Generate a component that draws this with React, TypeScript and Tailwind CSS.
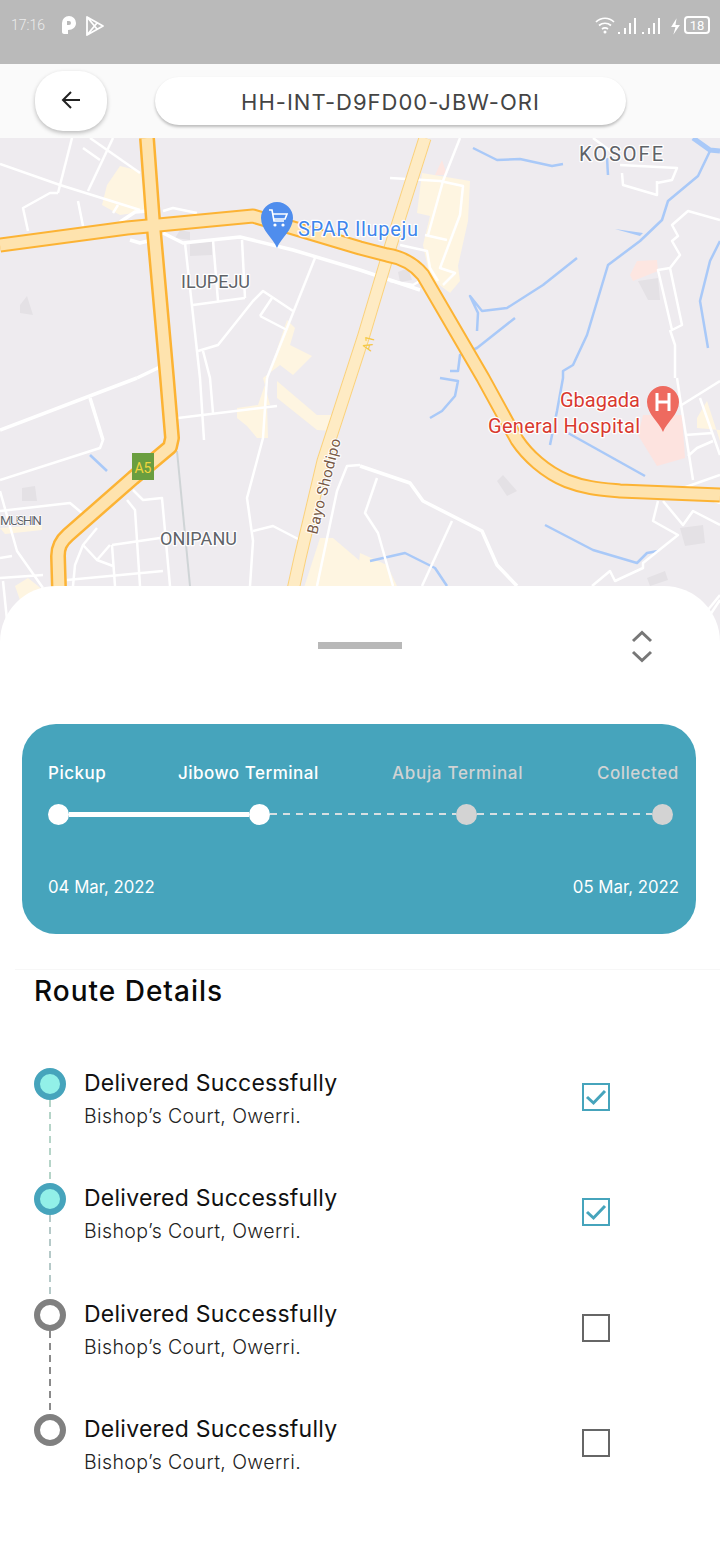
import React from "react";

const whiteThin = [
  "M0 164L60 185L140 210", "M72 138L58 193", "M113 138L88 191", "M83 148L100 160", "M90 138L140 173",
  "M58 193L50 193L23 208L28 231", "M78 201L83 226", "M113 213L118 205", "M185 243L200 378 L204 440", "M213 240L218 301", "M242 240L245 298",
  "M193 305L245 298", "M198 351L218 345L253 301L263 291L293 311", "M260 316L287 330", "M272 298L260 316",
  "M315 258L267 378", "M203 351L210 378L213 413", "M163 211L173 208L197 213", "M90 398L103 440L100 448L0 480",
  "M0 491L17 551L43 588", "M0 511L70 503L88 518", "M133 490L143 500L162 498L170 586", "M127 500L135 510L140 586",
  "M97 528L83 545L75 565L73 586", "M83 545L97 560L113 566", "M110 545L97 560", "M112 545L115 586", "M112 545L160 538",
  "M67 580L163 571", "M0 558L12 556", "M0 578L43 575", "M3 581L7 620", "M178 418L277 406", "M267 378L263 438L247 498L253 541L250 586",
  "M253 531L273 526L300 540", "M360 465L347 466L337 491L317 586", "M460 138L443 181L428 235", "M390 178L440 181L463 186L460 215L440 268L455 273L443 285",
  "M425 235L447 240", "M400 245L427 251L430 268L438 281", "M390 281L413 285L425 278", "M593 138L620 158", "M620 165L677 168L672 180L657 183",
  "M622 173L623 185L657 195L657 181", "M720 220L688 211L672 225L678 236L672 241L680 255L670 268L658 270L672 330L682 325L670 268",
  "M670 330L675 345L675 378", "M377 478L365 513L378 533L393 586", "M452 521L422 586",
  "M592 586L610 571L615 581L643 568L643 563L678 535L653 521L658 501", "M677 378L680 398L693 480", "M680 406L720 381",
  "M700 398L720 455", "M685 435L713 433", "M688 456L697 448L713 441", "M663 501L683 525L693 511L720 525", "M683 488L720 475", "M707 611L720 595",
  "M700 630L720 600", "M685 490L720 503",
];
const whiteThick = [
  "M0 430L137 378", "M137 378L162 366", "M360 466L410 483L423 501L482 531L497 565L517 586", "M163 233L183 243L240 237L293 250L360 270L420 290",
  "M120 222L135 212L160 210", "M130 240L140 243L152 240", "M90 398L103 440",
];
const blue = [
  "M473 148L497 160L520 159L552 166L563 164", "M710 151L698 176L668 201L662 220L640 241L608 265L587 335L573 365L563 371L563 378L557 411L550 445",
  "M577 258L543 285L507 308L482 311L470 296L478 313L477 331", "M515 318L477 348L460 355L458 371L450 371", "M440 378L458 381L455 396L442 411L430 418",
  "M720 241L710 261L700 301L708 348", "M568 433L645 476", "M545 525L593 550L637 563L647 553L658 551", "M370 561L405 553L435 568L447 586",
  "M90 455L107 471", "M607 158L608 175",
];
const pale = [
  "120,166 140,171 147,211 120,215 102,205 107,185", "287,320 295,328 290,345 312,356 293,375 280,365 263,378 270,405 267,405 268,438 257,438 247,426 237,418 237,408 258,405",
  "277,381 317,415 333,415 333,431 317,430 277,398", "422,173 470,181 468,221 458,266 460,281 450,293 430,278 423,245 430,216 417,213",
  "320,538 333,538 360,561 395,586 395,600 300,600", "360,553 387,565 397,586 397,600 355,600", "0,528 42,525 42,530 5,534", "15,586 28,578 43,590 20,600", "697,418 707,401 720,441 720,430 697,428",
];
const gray = [
  "190,243 212,241 212,255 190,256", "20,305 27,296 33,315 20,313", "22,488 35,486 37,501 22,501", "497,481 503,475 517,491 507,496",
  "680,528 703,525 705,543 685,546", "647,578 665,571 668,580 650,586", "638,281 658,278 660,300 648,300", "180,230 190,232 190,240 175,238", "398,272 408,268 412,280 400,282",
];

const mainRoad = "M0 245L127 228L253 216L360 248L387 255C405 258 415 265 423 275L483 378L517 440C527 455 545 472 567 481C585 488 600 489 620 491L720 495";
const a5Road = "M147 138L153 220L167 378L172 438L170 447L133 478L68 535C60 542 58 548 58 556L59 590";
const a1Road = "M425 138L390 248L363 338L323 461L300 558L293 590";

function MapLabel({ x, y, children, size, width, fill, halo }: { x: number; y: number; children: string; size: number; width?: number; fill: string; halo?: number }) {
  return (
    <text x={x} y={y} fontSize={size} fill={fill} stroke="#ffffff" strokeWidth={halo ?? 2.5} paintOrder="stroke" strokeLinejoin="round" textLength={width} lengthAdjust="spacing" fontFamily="Roboto, 'Liberation Sans', sans-serif">
      {children}
    </text>
  );
}

function MapDrawing() {
  return (
    <svg className="block w-[720px] h-[522px]" viewBox="0 138 720 522">
      <rect x="0" y="138" width="720" height="522" fill="#eeebef" />
      {pale.map((p) => <polygon key={p} points={p} fill="#fef5e1" />)}
      <polygon points="435,175 442,160 447,175" fill="#fde6e1" />
      <polygon points="630,275 637,261 657,260 658,271 633,281" fill="#fde6e1" />
      <polygon points="643,415 682,415 685,458 657,466 638,435" fill="#fde3df" />
      {gray.map((p) => <polygon key={p} points={p} fill="#e4e1e5" />)}
      <path d="M177 451L190 586" stroke="#cfd4d6" strokeWidth="2" fill="none" />
      {blue.map((d) => <path key={d} d={d} stroke="#a9c9f8" strokeWidth="2.5" fill="none" strokeLinejoin="round" />)}
      <path d="M693 138L710 150L720 151" stroke="#a9c9f8" strokeWidth="5" fill="none" />
      <polygon points="615,229 643,233 640,236" fill="#a9c9f8" />
      {whiteThin.map((d) => <path key={d} d={d} stroke="#ffffff" strokeWidth="2.5" fill="none" strokeLinejoin="round" />)}
      {whiteThick.map((d) => <path key={d} d={d} stroke="#ffffff" strokeWidth="3.5" fill="none" strokeLinejoin="round" />)}

      <path d={a1Road} stroke="#fbd27c" strokeWidth="13" fill="none" />
      <path d={a1Road} stroke="#feebc4" strokeWidth="11" fill="none" />

      <g fill="none" strokeLinejoin="round">
        <path d={mainRoad} stroke="#fcb334" strokeWidth="15" />
        <path d={a5Road} stroke="#fcb334" strokeWidth="16" />
        <path d={mainRoad} stroke="#fee3ae" strokeWidth="11" />
        <path d={a5Road} stroke="#fee3ae" strokeWidth="11" />
      </g>

      <rect x="132" y="453" width="22" height="27" fill="#6a9e3f" />
      <text x="143" y="473" textAnchor="middle" fontSize="14" fill="#f1d53c" fontFamily="Roboto, sans-serif">A5</text>
      <text x="0" y="0" transform="translate(371 352) rotate(-75)" fontSize="13" fill="#f5c843" fontFamily="Roboto, sans-serif">A1</text>
      <text x="0" y="0" transform="translate(317 535) rotate(-76)" fontSize="15" fill="#7a5a46" stroke="#ffffff" strokeWidth="2" paintOrder="stroke" textLength="98" fontFamily="Roboto, sans-serif">Bayo Shodipo</text>

      <MapLabel x={181} y={288} size={18} width={69} fill="#5f6368">ILUPEJU</MapLabel>
      <MapLabel x={579} y={161} size={20} width={84} fill="#5f6368">KOSOFE</MapLabel>
      <MapLabel x={160} y={545} size={18} width={77} fill="#5f6368">ONIPANU</MapLabel>
      <MapLabel x={0} y={525} size={13.5} width={42} fill="#5f6368" halo={1.5}>MUSHIN</MapLabel>
      <MapLabel x={298} y={236} size={20} width={120} fill="#3f86ec">SPAR Ilupeju</MapLabel>
      <MapLabel x={560} y={407} size={20} width={80} fill="#d93a30">Gbagada</MapLabel>
      <MapLabel x={488} y={433} size={20} width={152} fill="#d93a30">General Hospital</MapLabel>

      <path d="M277 248C273 238 261 230 261 218A16 16 0 0 1 293 218C293 230 281 238 277 248Z" fill="#4f8ded" />
      <path d="M269 210H272L274 221H284M273 214H287L285 219H274" stroke="#ffffff" strokeWidth="1.6" fill="none" />
      <circle cx="275" cy="225" r="1.6" fill="#fff" />
      <circle cx="283" cy="225" r="1.6" fill="#fff" />

      <path d="M663 432C659 422 647 414 647 402A16 16 0 0 1 679 402C679 414 667 422 663 432Z" fill="#ee6a5f" />
      <path d="M657 393V411M669 393V411M657 402H669" stroke="#ffffff" strokeWidth="3" fill="none" />
    </svg>
  );
}

function StatusBar() {
  return (
    <div className="h-16 bg-[#bababa] flex justify-between pl-[11px] pr-[10px] pt-[15px] text-[#ececec]">
      <div className="flex items-start">
        <span className="text-[14px] leading-[20px] font-['Roboto'] font-light mr-[16px]">17:16</span>
        <svg width="16" height="21" viewBox="0 0 16 21" className="mr-[8px]">
          <path fillRule="evenodd" d="M1 8A7 7 0 0 1 15 8C15 12 12 15 7 15V19H3C2 19 1 18 1 17ZM6 6H8A2 2 0 0 1 8 10H6Z" fill="#ffffff" />
        </svg>
        <svg width="20" height="22" viewBox="0 0 20 22">
          <path d="M2 2L18 11L2 20ZM2 2L12 14M2 20L12 8" stroke="#ffffff" strokeWidth="1.8" fill="none" strokeLinejoin="round" />
        </svg>
      </div>
      <div className="flex items-start">
        <svg width="22" height="22" viewBox="0 0 22 22" className="mr-[1px] -ml-[2px]">
          <path d="M2 7C7 2 15 2 20 7M5 10.500C8.500 7.500 13.500 7.500 17 10.500M8 14C10 12.500 12 12.500 14 14" stroke="#ffffff" strokeWidth="1.700" fill="none" />
          <circle cx="11" cy="17" r="1.500" fill="#fff" />
        </svg>
        <svg width="22" height="22" viewBox="0 0 22 22" className="mr-[2px]">
          <path d="M2 17V19M8 13V19M13 8V19M18 3V19" stroke="#ffffff" strokeWidth="2" />
        </svg>
        <svg width="22" height="22" viewBox="0 0 22 22" className="mr-[5px]">
          <path d="M2 17V19M8 13V19M13 8V19M18 3V19" stroke="#ffffff" strokeWidth="2" />
        </svg>
        <svg width="15" height="22" viewBox="0 0 12 20" className="mr-[1px]">
          <path d="M7 3L2 11H6L4 18L10 9H6Z" fill="#ffffff" />
        </svg>
        <div className="w-[26px] h-[18px] mt-px border-2 border-white rounded-[4px] flex items-center justify-center text-[13px] leading-none font-['Roboto'] text-white">18</div>
      </div>
    </div>
  );
}

function Header() {
  return (
    <div className="h-[74px] bg-[#fafafa] flex items-center pl-[35px] gap-[48px]">
      <div className="w-[72px] h-[60px] rounded-[28px] bg-white shadow-[0_2px_4px_rgba(0,0,0,0.25)] flex items-center justify-center">
        <svg width="22" height="22" viewBox="0 0 22 22" className="mb-[2px]">
          <path d="M20 11H3M11 3L3 11L11 19" stroke="#222222" strokeWidth="2" fill="none" />
        </svg>
      </div>
      <div className="w-[471px] h-[48px] rounded-[24px] bg-white shadow-[0_2px_3px_rgba(0,0,0,0.25)] flex items-center justify-center pt-[2px] text-[22px] text-[#444444] tracking-[1px]">
        HH-INT-D9FD00-JBW-ORI
      </div>
    </div>
  );
}

function Steps() {
  return (
    <div className="mx-[22px] w-[674px] h-[210px] rounded-[34px] bg-[#46a4bc] pl-[26px] pt-[38px] shrink-0">
      <div className="flex text-[17px] leading-[22px] font-medium tracking-[0.5px]">
        <span className="w-[130px] text-white">Pickup</span>
        <span className="w-[214px] text-white">Jibowo Terminal</span>
        <span className="w-[205px] text-[#d0d3d4] tracking-[0.7px]">Abuja Terminal</span>
        <span className="text-[#d0d3d4]">Collected</span>
      </div>
      <div className="flex items-center mt-[18px] h-[24px] -ml-[0.5px]">
        <div className="w-[21px] h-[21px] rounded-full bg-white shrink-0" />
        <div className="w-[180px] h-[5px] bg-white" />
        <div className="w-[21px] h-[21px] rounded-full bg-white shrink-0" />
        <div className="w-[186px] h-[2px] bg-[repeating-linear-gradient(90deg,#d6dfe2_0_7px,transparent_7px_13px)]" />
        <div className="w-[21px] h-[21px] rounded-full bg-[#d3d3d3] shrink-0" />
        <div className="w-[175px] h-[2px] bg-[repeating-linear-gradient(90deg,#d6dfe2_0_7px,transparent_7px_13px)]" />
        <div className="w-[21px] h-[21px] rounded-full bg-[#d3d3d3] shrink-0" />
      </div>
      <div className="flex justify-between mt-[49px] pr-[17px] text-[16.800px] leading-[24px] text-white">
        <span>04 Mar, 2022</span>
        <span>05 Mar, 2022</span>
      </div>
    </div>
  );
}

function Row({ done, last, line }: { done: boolean; last?: boolean; line: string }) {
  return (
    <div className="flex h-[115.300px] shrink-0">
      <div className="relative w-[32px] ml-[34px] mr-[18px] shrink-0">
        <div className={done ? "relative z-10 w-8 h-8 rounded-full border-[6px] border-[#46a4bc] bg-[#92f0e8]" : "relative z-10 w-8 h-8 rounded-full border-[6px] border-[#808080] bg-white"} />
        {!last && <div className={"absolute left-[15px] top-[32px] w-[2px] h-[84px] " + line} />}
      </div>
      <div className="w-[498px] shrink-0 -mt-[2px]">
        <div className="text-[23px] leading-[34px] text-[#111111] tracking-[0.25px]">Delivered Successfully</div>
        <div className="text-[19.500px] leading-[33px] font-light text-[#222222] tracking-[0.4px]">Bishop’s Court, Owerri.</div>
      </div>
      <div className={done ? "w-7 h-7 mt-[15px] border-[2.5px] border-[#46a4bc] flex items-center justify-center" : "w-7 h-7 mt-[15px] border-[2px] border-[#666666]"}>
        {done && (
          <svg width="24" height="24" viewBox="0 0 24 24">
            <path d="M3 12L9.500 18L21 6" stroke="#46a4bc" strokeWidth="3" fill="none" />
          </svg>
        )}
      </div>
    </div>
  );
}

export default function App() {
  return (
    <div className="w-[720px] h-[1548px] bg-white overflow-hidden font-['Inter',sans-serif]">
      <StatusBar />
      <Header />
      <MapDrawing />
      <div className="relative -mt-[74px] h-[962px] rounded-t-[56px] bg-white flex flex-col">
        <div className="h-[138px] shrink-0 flex items-start pt-[44px] pl-[318px]">
          <div className="w-[84px] h-[7px] bg-[#b8b8b8] mt-[12px] mr-[228px] shrink-0" />
          <svg width="24" height="33" viewBox="0 0 24 33" className="shrink-0">
            <path d="M3 11L12 2.500L21 11M3 22L12 30.500L21 22" stroke="#777777" strokeWidth="3" fill="none" />
          </svg>
        </div>
        <Steps />
        <div className="h-px ml-[15px] mt-[35px] bg-[#f7f7f7] shrink-0" />
        <div className="text-[28px] leading-[40px] font-medium text-[#0a0a0a] pl-[34px] mt-[1px] tracking-[1px]">Route Details</div>
        <div className="mt-[57px] flex flex-col">
          <Row done line="bg-[repeating-linear-gradient(180deg,#b5d4c8_0_7px,transparent_7px_12px)]" />
          <Row done line="bg-[repeating-linear-gradient(180deg,#b5c9c8_0_7px,transparent_7px_12px)]" />
          <Row done={false} line="bg-[repeating-linear-gradient(180deg,#8a8a8a_0_7px,transparent_7px_12px)]" />
          <Row done={false} last line="" />
        </div>
      </div>
    </div>
  );
}
